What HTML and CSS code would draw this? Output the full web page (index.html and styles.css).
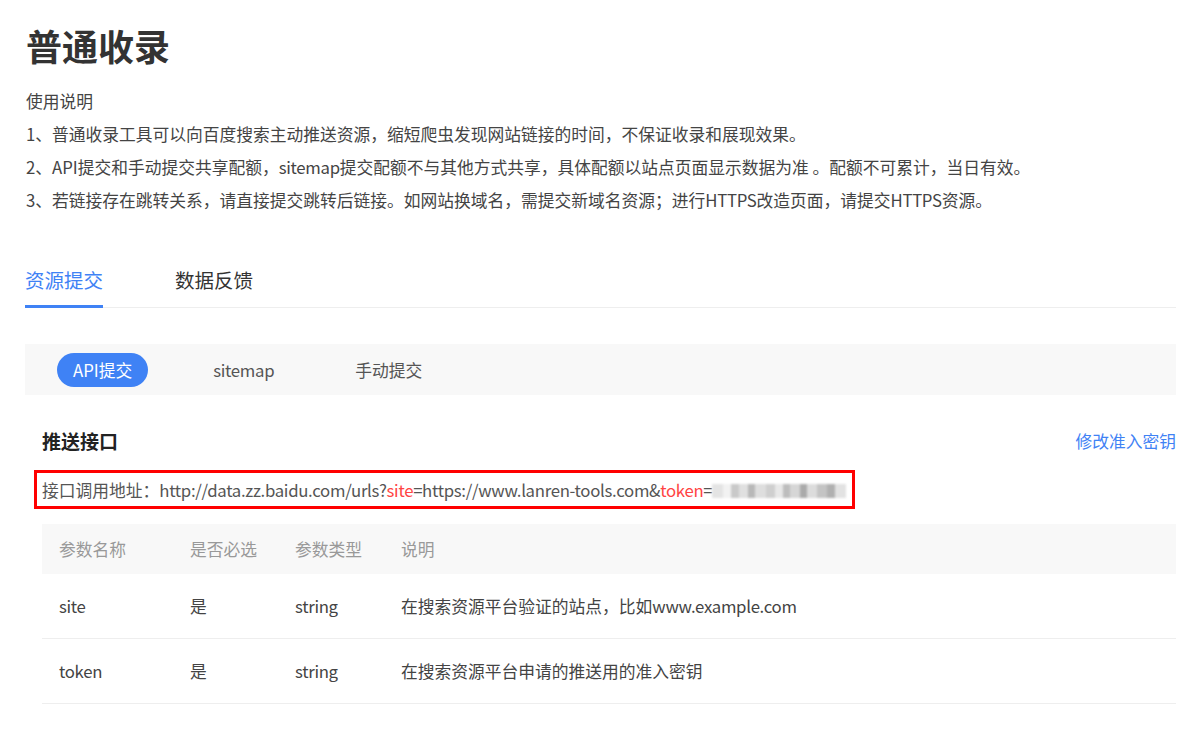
FILE: index.html
```html
<!DOCTYPE html>
<html lang="zh-CN">
<head>
<meta charset="utf-8">
<title>普通收录</title>
<link rel="stylesheet" href="styles.css">
</head>
<body>
<div class="page">
  <h1 class="title">普通收录</h1>
  <div class="desc">
    <p>使用说明</p>
    <p>1、普通收录工具可以向百度搜索主动推送资源，缩短爬虫发现网站链接的时间，不保证收录和展现效果。</p>
    <p>2、API提交和手动提交共享配额，<span class="latin">sitemap</span>提交配额不与其他方式共享，具体配额以站点页面显示数据为准 。配额不可累计，当日有效。</p>
    <p>3、若链接存在跳转关系，请直接提交跳转后链接。如网站换域名，需提交新域名资源；进行<span class="latin">HTTPS</span>改造页面，请提交<span class="latin">HTTPS</span>资源。</p>
  </div>
  <div class="tabs">
    <div class="tab active">资源提交</div>
    <div class="tab">数据反馈</div>
  </div>
  <div class="subtabs">
    <div class="subtab active">API提交</div>
    <div class="subtab latin">sitemap</div>
    <div class="subtab">手动提交</div>
  </div>
  <div class="section">
    <div class="section-head">
      <h2 class="section-title">推送接口</h2>
      <a class="link">修改准入密钥</a>
    </div>
    <div class="endpoint"><span>接口调用地址：<span class="url">http://data.zz.baidu.com/urls?<em class="hl">site</em>=https://www.lanren-tools.com&amp;<em class="hl">token</em>=</span></span><span class="masked"></span></div>
    <div class="table">
      <div class="row head">
        <div class="cell">参数名称</div>
        <div class="cell">是否必选</div>
        <div class="cell">参数类型</div>
        <div class="cell">说明</div>
      </div>
      <div class="row">
        <div class="cell latin">site</div>
        <div class="cell">是</div>
        <div class="cell latin">string</div>
        <div class="cell">在搜索资源平台验证的站点，比如<span class="latin">www.example.com</span></div>
      </div>
      <div class="row">
        <div class="cell latin">token</div>
        <div class="cell">是</div>
        <div class="cell latin">string</div>
        <div class="cell">在搜索资源平台申请的推送用的准入密钥</div>
      </div>
    </div>
  </div>
</div>
</body>
</html>
```
FILE: styles.css
```css
* { box-sizing: border-box; }
html, body { margin: 0; padding: 0; background: #fff; }
body {
  font-family: "Noto Sans CJK SC", "Noto Sans", sans-serif;
  font-size: 16.75px;
  color: #444;
}
.latin { letter-spacing: -0.3px; }
.page { padding: 20px 24px 0 25px; }
.title {
  margin: 0 0 0 1px;
  font-size: 36px;
  line-height: 50px;
  font-weight: 700;
  color: #333;
}
.desc { margin-top: 15px; padding-left: 1px; }
.desc p { margin: 0; line-height: 33px; color: #444; }
.tabs {
  margin-top: 49px;
  display: flex;
  gap: 72px;
  border-bottom: 1px solid #eeeeee;
}
.tab {
  font-size: 19.5px;
  line-height: 28px;
  padding-bottom: 11px;
  border-bottom: 3px solid transparent;
  margin-bottom: -1px;
  color: #333;
}
.tab.active { color: #3f82f5; border-bottom-color: #3f82f5; }
.subtabs {
  margin-top: 36px;
  height: 51px;
  background: #f8f8f8;
  display: flex;
  align-items: center;
  gap: 49px;
  padding-left: 32px;
}
.subtab {
  height: 34px;
  line-height: 34px;
  padding: 0 16px;
  border-radius: 17px;
  color: #555;
}
.subtab.active { background: #3f82f5; color: #fff; }
.section { padding-left: 17px; }
.section-head {
  margin-top: 32px;
  display: flex;
  justify-content: space-between;
  align-items: center;
  height: 28px;
}
.section-title { margin: 0; font-size: 19px; font-weight: 700; color: #222; line-height: 28px; }
.link { color: #3f82f5; cursor: pointer; }
.endpoint {
  margin-top: 15px;
  margin-left: -8px;
  display: inline-flex;
  align-items: center;
  border: 3px solid #f00;
  height: 39px;
  padding: 0 6px 0 5px;
  color: #555;
  white-space: nowrap;
}
.url { letter-spacing: -0.3px; }
.hl { font-style: normal; color: #f44; }
.masked {
  display: inline-block;
  width: 134px;
  height: 14px;
  margin-top: 2px;
  background: linear-gradient(90deg,
    #e4e4e4 0 8%, #f2f2f2 8% 14%, #c9c9c9 14% 20%, #e0e0e0 20% 27%, #b8b8b8 27% 32%,
    #dedede 32% 40%, #cfcfcf 40% 47%, #e8e8e8 47% 53%, #bdbdbd 53% 58%, #d6d6d6 58% 66%,
    #aaaaaa 66% 71%, #dcdcdc 71% 78%, #c4c4c4 78% 86%, #b0b0b0 86% 92%, #e2e2e2 92% 100%);
  filter: blur(1.2px);
}
.table { margin-top: 15px; }
.row {
  display: grid;
  grid-template-columns: 131px 105px 106px 1fr;
  height: 65px;
  align-items: center;
  border-bottom: 1px solid #eeeeee;
  color: #444;
}
.row.head { height: 50px; background: #f8f8f8; border-bottom: none; color: #999; }
.cell { padding-left: 17px; white-space: nowrap; }
```
